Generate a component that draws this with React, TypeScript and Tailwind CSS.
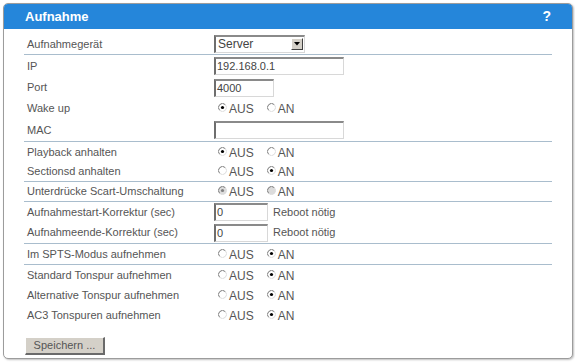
import React from "react";

function Radio({ checked, disabled }: { checked: boolean; disabled?: boolean }) {
  return (
    <svg width="9" height="9" viewBox="0 0 9 9" className="shrink-0">
      <circle cx="4.5" cy="4.5" r="4" fill={disabled ? "#dcdcdc" : "#ffffff"} />
      <path d="M7.33 1.67 A4 4 0 0 0 1.67 7.33" fill="none" stroke="#7a7a7a" strokeWidth="1" />
      <path d="M1.67 7.33 A4 4 0 0 0 7.33 1.67" fill="none" stroke="#dcdcdc" strokeWidth="1" />
      {checked && <circle cx="4.5" cy="4.5" r="1.6" fill={disabled ? "#808080" : "#000000"} />}
    </svg>
  );
}

function RadioPair({ on, disabled }: { on: boolean; disabled?: boolean }) {
  return (
    <div className="flex items-center pl-[4px] text-[12px] text-[#555]">
      <div className="mt-[-2px]">
        <Radio checked={!on} disabled={disabled} />
      </div>
      <span className="ml-[2px] mt-[1px]">AUS</span>
      <div className="ml-[13px] mt-[-2px]">
        <Radio checked={on} disabled={disabled} />
      </div>
      <span className="ml-[2px] mt-[1px]">AN</span>
    </div>
  );
}

function TextBox({ value, w }: { value: string; w: string }) {
  return (
    <div
      className={`${w} h-[18px] flex items-center bg-white border-t-2 border-l-2 border-r border-b border-t-[#8a8a8a] border-l-[#6e6e6e] border-r-[#d8d8d8] border-b-[#d8d8d8] pl-[1px] text-[11px] text-[#444] leading-none`}
    >
      {value}
    </div>
  );
}

function Row({
  label,
  h,
  border,
  children,
}: {
  label: string;
  h: string;
  border?: boolean;
  children?: React.ReactNode;
}) {
  return (
    <div className={`flex items-center ${h} ${border ? "border-b border-[#a9bdcd]" : ""}`}>
      <div className="w-[190px] pl-[3px] text-[11px] text-[#555] leading-none">{label}</div>
      <div className="flex items-center">{children}</div>
    </div>
  );
}

export default function App() {
  return (
    <div className="w-[575px] h-[363px] bg-white pt-[3px] pl-[3px] font-['Liberation_Sans',Arial,sans-serif]">
      <div className="w-[570px] h-[356px] flex flex-col border border-[#9c9c9c] rounded-[5px] shadow-[1px_1px_2px_rgba(0,0,0,0.25)] overflow-hidden bg-white">
        <div className="h-[25px] shrink-0 bg-[#2586da] flex items-center justify-between pl-[21px] pr-[21px] text-white font-bold">
          <span className="text-[13px]">Aufnahme</span>
          <span className="text-[14px]">?</span>
        </div>
        <div className="pt-[5px] px-[20px] flex flex-col">
          <Row label="Aufnahmegerät" h="h-[21px]" border>
            <div className="w-[91px] h-[18px] mt-[-1px] flex items-center bg-white border-t-2 border-l-2 border-r border-b border-t-[#8a8a8a] border-l-[#6e6e6e] border-r-[#d8d8d8] border-b-[#d8d8d8]">
              <span className="flex-1 pl-[2px] text-[12px] text-[#444] leading-none">Server</span>
              <div className="w-[12px] h-[12px] mr-[1px] bg-[#d4d0c8] border border-t-white border-l-white border-r-[#404040] border-b-[#404040] flex items-center justify-center">
                <svg width="6" height="4" viewBox="0 0 6 4">
                  <path d="M0 0 H6 L3 3.5 Z" fill="#000" />
                </svg>
              </div>
            </div>
          </Row>
          <Row label="IP" h="h-[22px]">
            <TextBox value="192.168.0.1" w="w-[130px]" />
          </Row>
          <Row label="Port" h="h-[21px]">
            <TextBox value="4000" w="w-[60px]" />
          </Row>
          <Row label="Wake up" h="h-[21px]">
            <RadioPair on={false} />
          </Row>
          <Row label="MAC" h="h-[23px]" border>
            <TextBox value="" w="w-[130px]" />
          </Row>
          <Row label="Playback anhalten" h="h-[20px]">
            <RadioPair on={false} />
          </Row>
          <Row label="Sectionsd anhalten" h="h-[20px]" border>
            <RadioPair on={true} />
          </Row>
          <Row label="Unterdrücke Scart-Umschaltung" h="h-[20px]" border>
            <RadioPair on={false} disabled />
          </Row>
          <Row label="Aufnahmestart-Korrektur (sec)" h="h-[20px]">
            <TextBox value="0" w="w-[54px]" />
            <span className="ml-[5px] text-[11px] text-[#555]">Reboot nötig</span>
          </Row>
          <Row label="Aufnahmeende-Korrektur (sec)" h="h-[22px]" border>
            <TextBox value="0" w="w-[54px]" />
            <span className="ml-[5px] text-[11px] text-[#555]">Reboot nötig</span>
          </Row>
          <Row label="Im SPTS-Modus aufnehmen" h="h-[21px]" border>
            <RadioPair on={true} />
          </Row>
          <Row label="Standard Tonspur aufnehmen" h="h-[20px]">
            <RadioPair on={true} />
          </Row>
          <Row label="Alternative Tonspur aufnehmen" h="h-[20px]">
            <RadioPair on={true} />
          </Row>
          <Row label="AC3 Tonspuren aufnehmen" h="h-[20px]">
            <RadioPair on={true} />
          </Row>
          <div className="mt-[12px] ml-[1px]">
            <button className="w-[80px] h-[18px] bg-[#d4d0c8] border border-t-white border-l-white border-r-2 border-b-2 border-r-[#6a6a6a] border-b-[#6a6a6a] text-[11px] text-[#555] leading-none flex items-center justify-center">
              Speichern ...
            </button>
          </div>
        </div>
      </div>
    </div>
  );
}
